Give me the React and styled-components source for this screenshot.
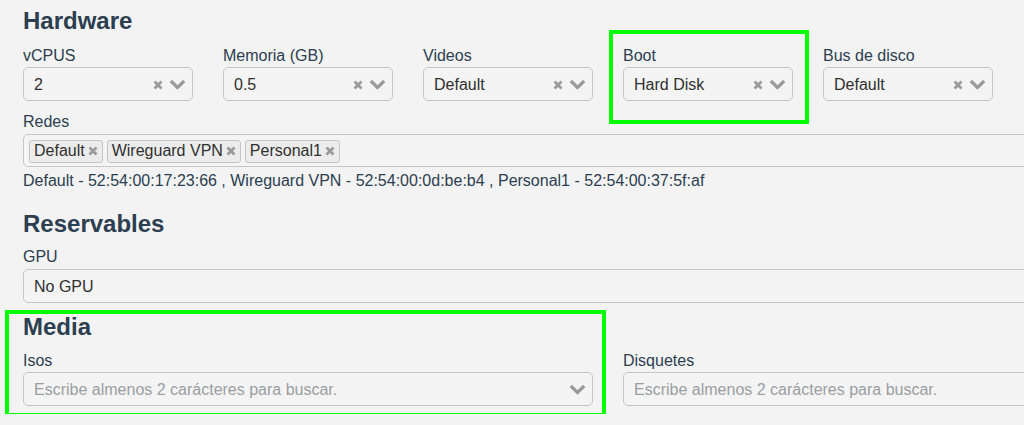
import React from 'react';
import styled, { createGlobalStyle } from 'styled-components';

const GlobalStyle = createGlobalStyle`
  html, body {
    margin: 0;
    overflow: hidden;
    background: #f2f3f2;
  }
  body {
    padding: 8px;
    font-family: "Liberation Sans", Arial, sans-serif;
    color: #2c3e50;
  }
`;

const Page = styled.div`
  width: 1200px;
`;

const Title = styled.h3`
  margin: ${(p) => p.$top || '0'} 0 0 ${(p) => p.$left || '15px'};
  padding-top: 4px;
  font-size: 24px;
  line-height: 18px;
  font-weight: 700;
  color: #2c3e50;
`;

const Row = styled.div`
  display: grid;
  grid-template-columns: ${(p) => p.$cols};
  align-items: end;
  margin-top: ${(p) => p.$top || '0'};
`;

const Col = styled.div`
  position: relative;
  padding: 0 15px;

  &::after {
    content: '';
    display: ${(p) => (p.$mark ? 'block' : 'none')};
    position: absolute;
    inset: ${(p) => p.$mark};
    border: 4px solid #00ff00;
    pointer-events: none;
  }
`;

const Label = styled.div`
  font-size: 16px;
  line-height: 22px;
  color: #2c3e50;
  margin-top: ${(p) => p.$top || '0'};
  margin-bottom: ${(p) => p.$gap || '0'};
`;

const Box = styled.div`
  display: flex;
  align-items: center;
  box-sizing: border-box;
  height: ${(p) => p.$h || '34px'};
  padding: 1px 6px 0 10px;
  border: 1px solid #c6c6c6;
  border-radius: 5px;
  background: #f3f4f3;
`;

const Value = styled.span`
  flex: 1;
  font-size: 16px;
  color: ${(p) => (p.$placeholder ? '#9a9ea3' : '#303030')};
  white-space: nowrap;
`;

const Icons = styled.span`
  display: flex;
  align-items: center;
  gap: 6px;
`;

const Tags = styled.div`
  display: flex;
  gap: 4px;
  margin-left: -5px;
`;

const Tag = styled.span`
  display: inline-flex;
  align-items: center;
  gap: 3px;
  box-sizing: border-box;
  height: 23px;
  padding: 0 4px;
  border: 1px solid #c4c4c4;
  border-radius: 3px;
  background: #ececec;
  font-size: 16px;
  color: #303030;
`;

const Info = styled.div`
  margin: 3px 0 0 15px;
  font-size: 16px;
  line-height: 22px;
  color: #2c3e50;
`;

function Cross({ size = 10 }) {
  return (
    <svg width={size} height={size} viewBox="0 0 10 10">
      <path d="M1.5 1.5 L8.5 8.5 M8.5 1.5 L1.5 8.5" stroke="#999" strokeWidth="2.7" />
    </svg>
  );
}

function Chevron() {
  return (
    <svg width="17" height="11" viewBox="0 0 17 11">
      <polyline points="1.8,2 8.5,8.5 15.2,2" fill="none" stroke="#9a9a9a" strokeWidth="3.2" />
    </svg>
  );
}

function Select({ value, placeholder, clear = true }) {
  return (
    <Box>
      <Value $placeholder={!!placeholder}>{value || placeholder}</Value>
      <Icons>
        {clear && <Cross />}
        <Chevron />
      </Icons>
    </Box>
  );
}

const hardware = [
  ['vCPUS', '2'],
  ['Memoria (GB)', '0.5'],
  ['Videos', 'Default'],
  ['Boot', 'Hard Disk'],
  ['Bus de disco', 'Default'],
];

const networks = ['Default', 'Wireguard VPN', 'Personal1'];

export default function App() {
  return (
    <Page>
      <GlobalStyle />
      <Title>Hardware</Title>
      <Row $cols="repeat(5, 200px)" $top="15px">
        {hardware.map(([label, value]) => (
          <Col key={label} $mark={label === 'Boot' ? '-15px -1px -23px 1px' : undefined}>
            <Label>{label}</Label>
            <Select value={value} />
          </Col>
        ))}
      </Row>
      <Row $cols="1200px" $top="10px">
        <Col>
          <Label $gap="1px">Redes</Label>
          <Box $h="33px">
            <Tags>
              {networks.map((n) => (
                <Tag key={n}>
                  {n}
                  <Cross size={10} />
                </Tag>
              ))}
            </Tags>
          </Box>
        </Col>
      </Row>
      <Info>
        Default - 52:54:00:17:23:66 , Wireguard VPN - 52:54:00:0d:be:b4 , Personal1 - 52:54:00:37:5f:af
      </Info>
      <Title $top="19px">Reservables</Title>
      <Row $cols="1200px" $top="13px">
        <Col>
          <Label $gap="1px">GPU</Label>
          <Box>
            <Value>No GPU</Value>
          </Box>
        </Col>
      </Row>
      <Row $cols="600px 600px" $top="11px">
        <Col $mark="-4px 2px -11px -3px">
          <Title $left="0">Media</Title>
          <Label $top="14px">Isos</Label>
          <Select placeholder="Escribe almenos 2 carácteres para buscar." clear={false} />
        </Col>
        <Col>
          <Label>Disquetes</Label>
          <Box>
            <Value $placeholder>Escribe almenos 2 carácteres para buscar.</Value>
          </Box>
        </Col>
      </Row>
    </Page>
  );
}
